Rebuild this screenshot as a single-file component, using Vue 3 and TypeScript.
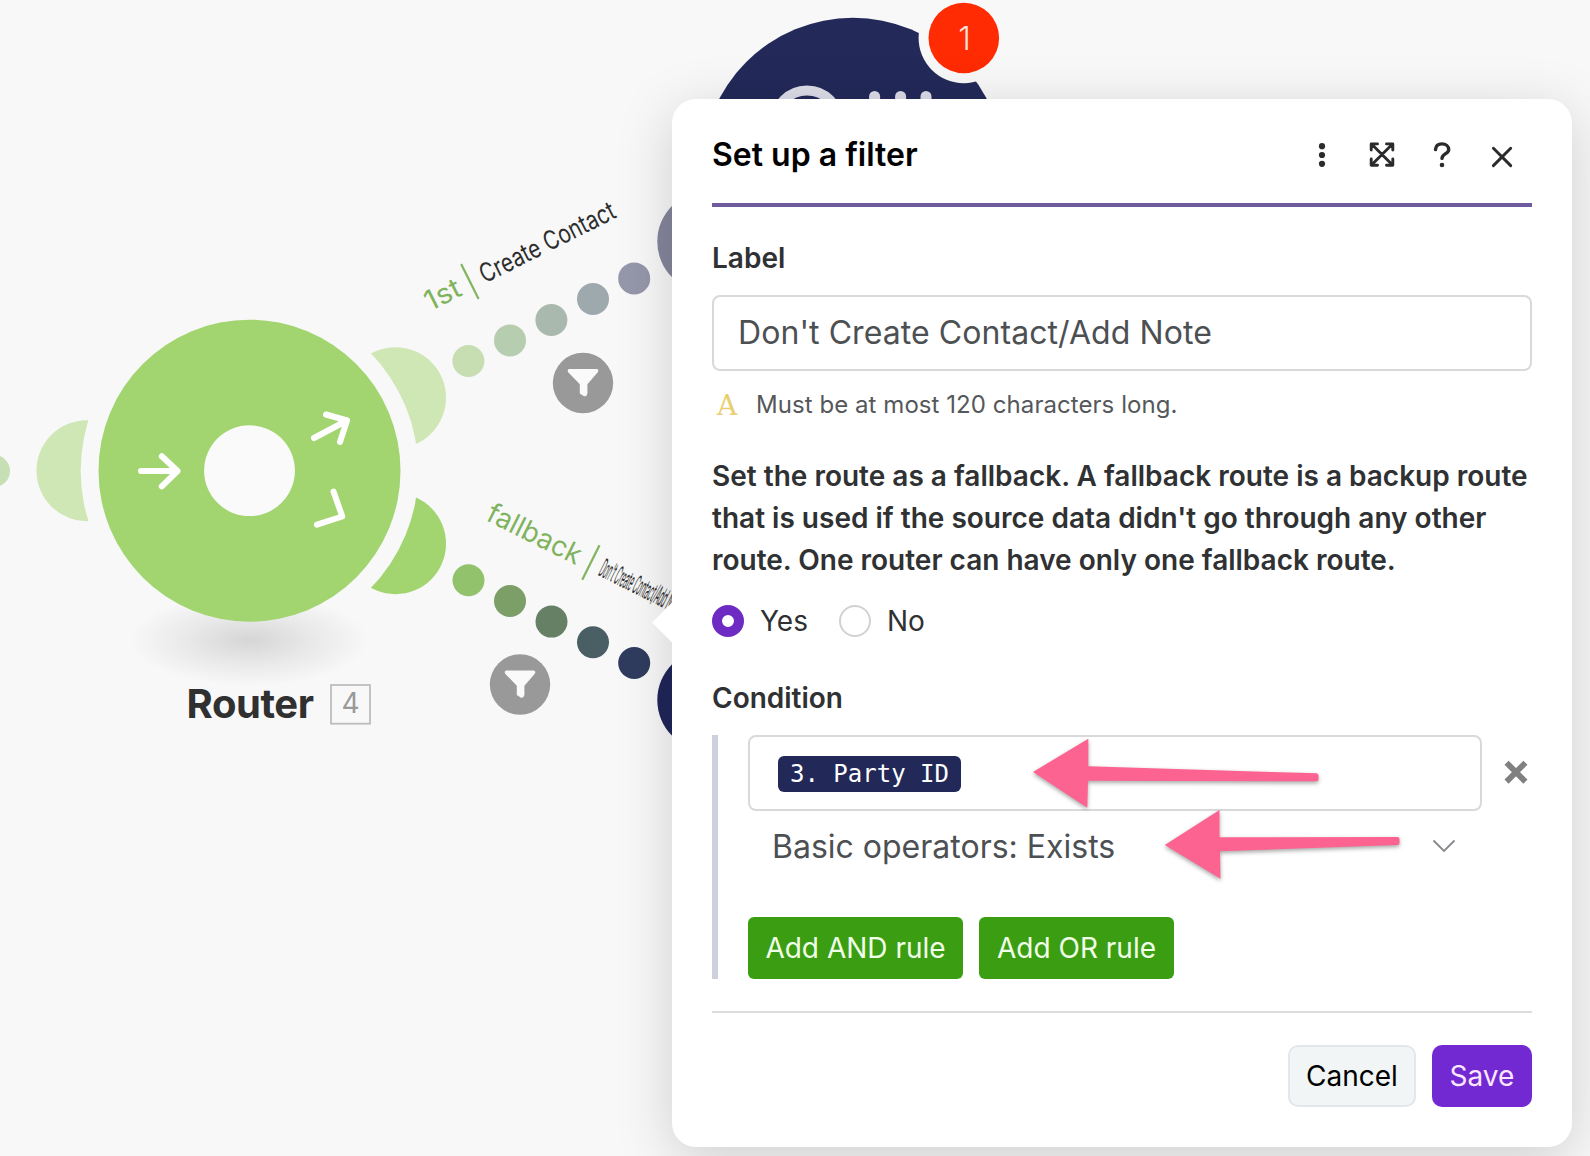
<script setup lang="ts">
import { ref } from 'vue'

interface Dot {
  x: number
  y: number
  color: string
}

type IconName = 'more' | 'expand' | 'help' | 'close'

const label = ref("Don't Create Contact/Add Note")
const fallback = ref<'Yes' | 'No'>('Yes')
const options: Array<'Yes' | 'No'> = ['Yes', 'No']
const headerIcons: IconName[] = ['more', 'expand', 'help', 'close']

const dots: Dot[] = [
  { x: -6, y: 471, color: '#c6dfb4' },
  // first route
  { x: 468.4, y: 361, color: '#c6deb2' },
  { x: 510, y: 340.4, color: '#b7cdb0' },
  { x: 551.4, y: 320, color: '#a9b9ae' },
  { x: 593, y: 299, color: '#9da9ac' },
  { x: 634.2, y: 278.4, color: '#9597aa' },
  // fallback route
  { x: 468.5, y: 580.2, color: '#92c36c' },
  { x: 510, y: 601, color: '#7c9f68' },
  { x: 551.5, y: 621.6, color: '#658065' },
  { x: 593, y: 642.2, color: '#495f63' },
  { x: 634.2, y: 663, color: '#303c5f' }
]

const filters = [
  { x: 583, y: 383 },
  { x: 520, y: 684.5 }
]
</script>

<template>
  <div class="scenario">
    <svg class="canvas" viewBox="0 0 1590 1156" width="1590" height="1156">
      <defs>
        <radialGradient id="floor-shadow">
          <stop offset="0" stop-color="#000" stop-opacity="0.14" />
          <stop offset="0.5" stop-color="#000" stop-opacity="0.065" />
          <stop offset="1" stop-color="#000" stop-opacity="0" />
        </radialGradient>
      </defs>

      <!-- Connectors of the router -->
      <circle cx="87" cy="470.7" r="50.5" fill="#cee7b5" />
      <circle cx="395.5" cy="397.7" r="50.5" fill="#cee7b5" />
      <circle cx="395.5" cy="543.7" r="50.5" fill="#a2d570" />
      <circle cx="249.5" cy="470.7" r="168.8" fill="#f8f8f8" />

      <!-- Router -->
      <ellipse cx="249.5" cy="640" rx="120" ry="46" fill="url(#floor-shadow)" />
      <circle cx="249.5" cy="470.7" r="151" fill="#a2d570" />
      <circle cx="249.5" cy="470.7" r="45.4" fill="#fafafa" />
      <g class="router-arrows">
        <path d="M141 471H177.5M161.8 456.3L177.5 471L161.8 486.3" />
        <path d="M314 438L347 420.5M326 414.5L347 420.5L340 442" />
        <path d="M333.5 491.5L342.3 516.5L317 524.7" />
      </g>

      <circle v-for="(dot, i) in dots" :key="i" :cx="dot.x" :cy="dot.y" r="16" :fill="dot.color" />
      <circle cx="708" cy="241.5" r="50.7" fill="#85869c" />
      <circle cx="708" cy="700" r="50.7" fill="#20265a" />

      <g v-for="filter in filters" :key="filter.y" :transform="`translate(${filter.x} ${filter.y})`">
        <circle r="30.2" fill="#999" />
        <path
          d="M-13.5 -14H13.5Q16.3 -13.6 14.8 -10.8L4.4 1.2V10.4Q3.6 14 0.6 13L-3.2 10.4V1.2L-14.8 -10.8Q-16.3 -13.6 -13.5 -14Z"
          fill="#fafafa"
        />
      </g>

      <!-- Route labels -->
      <g transform="translate(433 309.5) rotate(-26.6)">
        <text class="route-name" x="-3.5" y="0.5" textLength="37.5" lengthAdjust="spacingAndGlyphs">1st</text>
        <path class="route-line" d="M45.5 -28V11" />
        <text class="route-title" x="58" y="0" textLength="148.5" lengthAdjust="spacingAndGlyphs">Create Contact</text>
      </g>
      <g transform="translate(487.5 521) rotate(26.6)">
        <text class="route-name" x="-3" textLength="102" lengthAdjust="spacingAndGlyphs">fallback</text>
        <path class="route-line" d="M111 -28.5V10" />
        <text class="route-title" x="122.5" y="-1" textLength="88" lengthAdjust="spacingAndGlyphs">Don't Create Contact/Add Note</text>
      </g>

      <text class="router-title" x="186.5" y="717.7">Router</text>
      <rect x="331" y="685" width="39" height="38.7" fill="none" stroke="#bdbdbd" stroke-width="1.8" />
      <text class="router-number" x="350.5" y="713" text-anchor="middle">4</text>

      <!-- Module behind the dialog -->
      <circle cx="853" cy="168.8" r="151" fill="#232959" />
      <circle cx="807" cy="123" r="32.5" fill="none" stroke="#dcdde8" stroke-width="10" />
      <path d="M874.6 96.5V120M900.6 96.5V120M926 96.5V120" stroke="#dcdde8" stroke-width="11" stroke-linecap="round" />
      <circle cx="963.8" cy="38" r="45.2" fill="#f8f8f8" />
      <circle cx="963.8" cy="38" r="35.3" fill="#ff2b02" />
      <text class="badge-text" x="964.5" y="49.5" text-anchor="middle">1</text>
    </svg>

    <section class="dialog">
      <header class="dialog-header">
        <h3>Set up a filter</h3>
        <div class="header-actions">
          <button v-for="icon in headerIcons" :key="icon" class="btn-icon" type="button" :aria-label="icon">
            <svg v-if="icon === 'more'" viewBox="0 0 28 28" fill="currentColor">
              <circle cx="14" cy="5.2" r="3.1" />
              <circle cx="14" cy="14" r="3.1" />
              <circle cx="14" cy="22.8" r="3.1" />
            </svg>
            <svg v-else-if="icon === 'expand'" class="stroked" viewBox="0 0 28 28">
              <path d="M4 3.5L24 23.5M24 3.5L4 23.5M3.2 9V2.9H9.5M18.5 2.9H24.8V9M24.8 18V24.3H18.5M9.5 24.3H3.2V18" />
            </svg>
            <svg v-else-if="icon === 'help'" class="stroked help" viewBox="0 0 28 28">
              <path d="M7.5 8.6C7.8 4.8 10.6 2.9 14 2.9C17.8 2.9 20.7 5.2 20.7 8.7C20.7 12.8 14 12.6 14 17.4" />
              <circle cx="14" cy="24" r="2.3" fill="currentColor" stroke="none" />
            </svg>
            <svg v-else class="stroked" viewBox="0 0 28 28">
              <path d="M5.4 7.3L22.7 24.6M22.7 7.3L5.4 24.6" />
            </svg>
          </button>
        </div>
      </header>

      <h4 class="field-title">Label</h4>
      <div class="text-field label-field">{{ label }}</div>
      <p class="hint">
        <span class="hint-icon">A</span>
        <span>Must be at most 120 characters long.</span>
      </p>

      <p class="description">
        Set the route as a fallback. A fallback route is a backup route<br />
        that is used if the source data didn't go through any other<br />
        route. One router can have only one fallback route.
      </p>
      <div class="radio-group">
        <label v-for="option in options" :key="option" class="radio" @click="fallback = option">
          <span class="radio-mark" :class="{ checked: fallback === option }"></span>
          {{ option }}
        </label>
      </div>

      <h4 class="field-title condition-title">Condition</h4>
      <div class="condition">
        <div class="condition-row">
          <div class="text-field operand">
            <span class="chip">3. Party ID</span>
          </div>
          <button class="btn-remove" type="button" aria-label="Remove">
            <svg viewBox="0 0 28 28" width="28" height="28">
              <path d="M6.6 5.8L21.4 20.6M21.4 5.8L6.6 20.6" stroke="#808080" stroke-width="5.8" stroke-linecap="square" />
            </svg>
          </button>
        </div>
        <div class="operator">
          <span>Basic operators: Exists</span>
          <svg viewBox="0 0 24 14" width="24" height="14">
            <path d="M1.5 1.5L12 12L22.5 1.5" fill="none" stroke="#85898d" stroke-width="1.8" />
          </svg>
        </div>
        <div class="rule-buttons">
          <button class="btn btn-rule" type="button">Add AND rule</button>
          <button class="btn btn-rule btn-or" type="button">Add OR rule</button>
        </div>
      </div>

      <footer class="dialog-footer">
        <button class="btn btn-cancel" type="button">Cancel</button>
        <button class="btn btn-save" type="button">Save</button>
      </footer>
    </section>

    <!-- Hand-drawn pointers on top of the dialog -->
    <svg class="pointers" viewBox="0 0 1590 1156" width="1590" height="1156">
      <path d="M1033 772L1088.3 738.7V766.3L1316.5 773.3Q1318.5 773.5 1318.5 775.5V779.5Q1318.5 781.3 1316.5 781.3L1088 780.7L1087.3 807.8Z" />
      <path d="M1164.8 845L1219.5 810V837.2L1397.5 837Q1399.5 837 1399.5 839V843Q1399.5 845 1397.5 845L1220 851.3L1220.5 878.7Z" />
    </svg>
  </div>
</template>

<style>
body {
  margin: 0;
  background: #f8f8f8;
}
</style>

<style scoped>
.scenario {
  position: relative;
  width: 1590px;
  height: 1156px;
  overflow: hidden;
  background: #f8f8f8;
  font-family: Inter, "Liberation Sans", sans-serif;
  color: #2f3133;
}

.canvas,
.pointers {
  position: absolute;
  top: 0;
  left: 0;
}

/* Diagram */
.router-arrows path {
  fill: none;
  stroke: #fff;
  stroke-width: 6;
  stroke-linecap: round;
  stroke-linejoin: round;
}

.route-name {
  font-size: 28px;
  fill: #7fb35d;
}

.route-title {
  font-size: 26px;
  fill: #2d2d2d;
}

.route-line {
  stroke: #83b560;
  stroke-width: 2.2;
}

.router-title {
  font-size: 40px;
  font-weight: 700;
  letter-spacing: -0.4px;
  fill: #303030;
}

.router-number {
  font-size: 28px;
  fill: #999;
}

.badge-text {
  font-size: 32px;
  font-weight: 300;
  fill: #ffe3dc;
}

.pointers {
  pointer-events: none;
  filter: drop-shadow(0 2px 2px rgba(0, 0, 0, 0.35));
}

.pointers path {
  fill: #fd6391;
}

/* Dialog */
.dialog {
  position: absolute;
  top: 99px;
  left: 672px;
  box-sizing: border-box;
  width: 900px;
  height: 1048px;
  padding: 0 40px;
  border-radius: 24px;
  background: #fff;
  box-shadow: 0 12px 56px rgba(0, 0, 0, 0.17);
}

.dialog::before {
  content: '';
  position: absolute;
  top: 509px;
  left: -14.5px;
  width: 29px;
  height: 29px;
  background: #fff;
  transform: rotate(45deg);
}

.dialog-header {
  box-sizing: border-box;
  display: flex;
  justify-content: space-between;
  align-items: center;
  height: 108px;
  padding: 7px 16px 0 0;
  border-bottom: 4px solid #705b9f;
}

.dialog-header h3 {
  margin: 0;
  font-size: 32px;
  font-weight: 600;
  line-height: 40px;
  color: #000;
}

.header-actions {
  display: flex;
  gap: 32px;
}

.btn-icon {
  width: 28px;
  height: 28px;
  padding: 0;
  border: none;
  background: none;
  color: #2b2b2d;
  cursor: pointer;
}

.btn-icon svg {
  display: block;
  width: 28px;
  height: 28px;
}

.stroked {
  fill: none;
  stroke: currentColor;
  stroke-width: 2.9;
  stroke-linecap: round;
  stroke-linejoin: round;
}

.help {
  stroke-width: 3.4;
}

.field-title {
  margin: 34px 0 20px;
  font-size: 28px;
  font-weight: 600;
  line-height: 34px;
}

.text-field {
  box-sizing: border-box;
  display: flex;
  align-items: center;
  height: 76px;
  padding: 0 24px;
  border: 2px solid #d9d9d9;
  border-radius: 8px;
  font-size: 32px;
  color: #4d5053;
}

.label-field {
  padding-bottom: 2px;
  letter-spacing: 0.07px;
}

.hint {
  display: flex;
  align-items: center;
  gap: 17px;
  margin: 19px 0 0 5px;
  font-size: 24px;
  line-height: 30px;
  letter-spacing: 0.06px;
  color: #55585b;
}

.hint-icon {
  width: 22px;
  padding-top: 1px;
  font-family: "DejaVu Serif", serif;
  font-size: 28px;
  line-height: 29px;
  color: #e9cf74;
}

.description {
  margin: 35px 0 24px;
  font-size: 28px;
  font-weight: 600;
  line-height: 42px;
  white-space: nowrap;
}

.radio-group {
  display: flex;
  gap: 31px;
}

.radio {
  display: flex;
  align-items: center;
  gap: 16px;
  height: 32px;
  font-size: 28px;
  cursor: pointer;
}

.radio-mark {
  box-sizing: border-box;
  width: 32px;
  height: 32px;
  border: 2px solid #d2d2d2;
  border-radius: 50%;
  background: #fff;
}

.radio-mark.checked {
  border: 10px solid #6d2bc4;
}

.condition-title {
  margin-top: 44px;
}

.condition {
  padding-left: 30px;
  border-left: 6px solid #cdd0de;
}

.condition-row {
  display: flex;
  align-items: center;
  gap: 20px;
}

.operand {
  width: 734px;
  padding: 2px 28px 0;
}

.chip {
  padding: 0 12px;
  border-radius: 6px;
  background: #222857;
  color: #fff;
  font-family: "DejaVu Sans Mono", monospace;
  font-size: 24px;
  line-height: 36px;
}

.btn-remove {
  width: 28px;
  height: 28px;
  padding: 0;
  border: none;
  background: none;
  cursor: pointer;
}

.btn-remove svg {
  display: block;
}

.operator {
  display: flex;
  justify-content: space-between;
  align-items: center;
  height: 70px;
  padding: 0 76px 0 24px;
  font-size: 32px;
  color: #4d5053;
}

.rule-buttons {
  display: flex;
  gap: 16px;
  margin-top: 36px;
}

.btn {
  box-sizing: border-box;
  height: 62px;
  padding: 0;
  border: none;
  font-family: inherit;
  font-size: 28px;
  cursor: pointer;
}

.btn-rule {
  width: 215px;
  border-radius: 6px;
  background: #3b9e12;
  color: #f1ffe9;
}

.btn-or {
  width: 195px;
}

.dialog-footer {
  display: flex;
  justify-content: flex-end;
  gap: 16px;
  margin-top: 32px;
  padding-top: 32px;
  border-top: 2px solid #dcdcdc;
}

.btn-cancel {
  width: 128px;
  border: 2px solid #e4e7e9;
  border-radius: 10px;
  background: #f1f5f6;
  color: #000;
}

.btn-save {
  width: 100px;
  border-radius: 10px;
  background: #7229d2;
  color: #fbe6ff;
}
</style>
